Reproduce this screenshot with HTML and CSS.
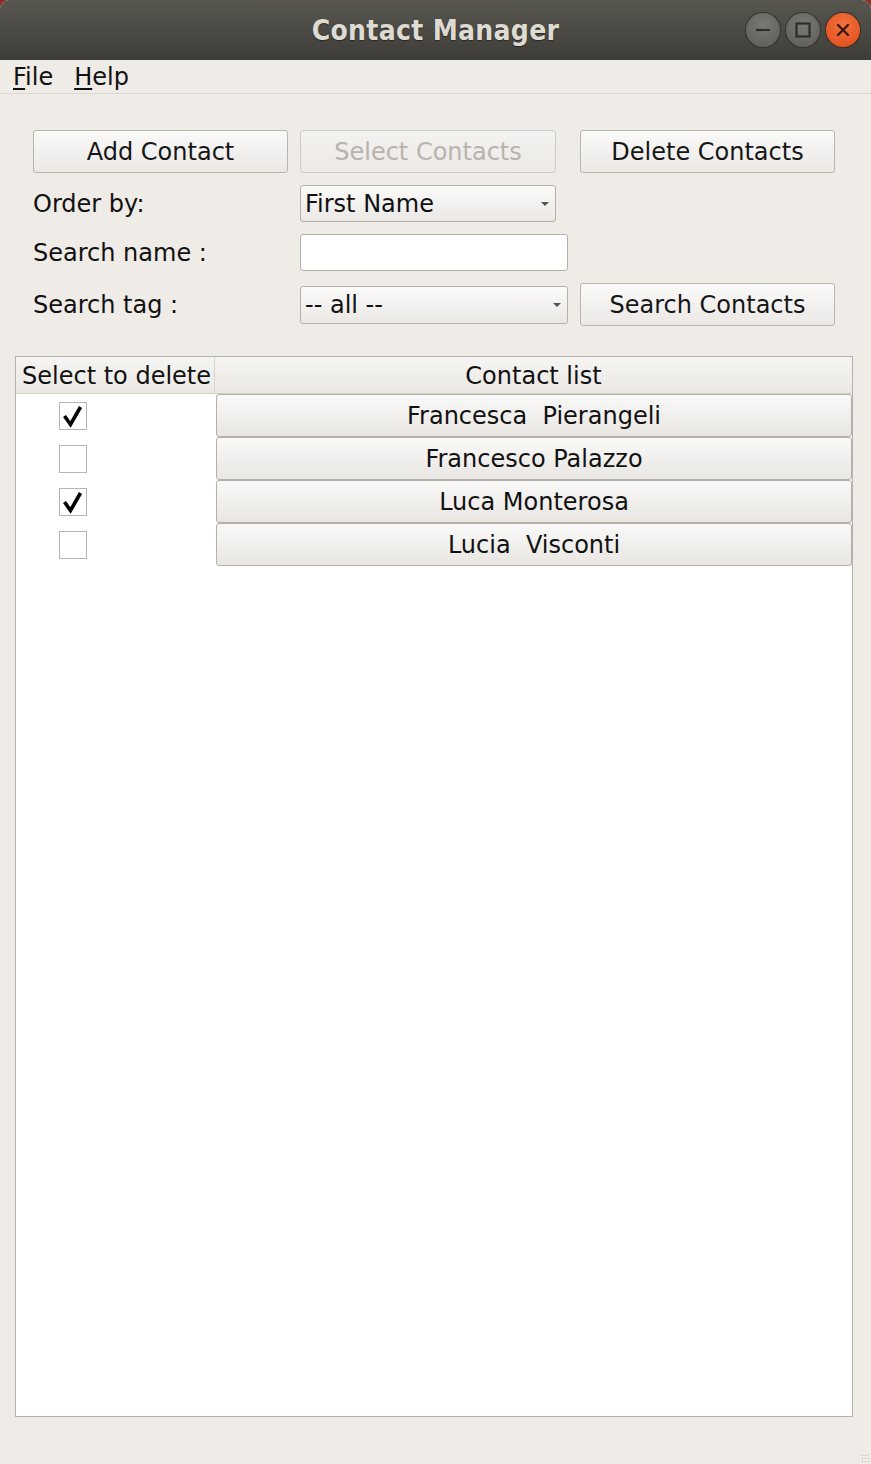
FILE: index.html
```html
<!DOCTYPE html>
<html>
<head>
<meta charset="utf-8">
<link rel="stylesheet" href="styles.css">
</head>
<body>
<div class="window">
  <div class="titlebar">
    <div class="title">Contact Manager</div>
    <div class="wm-buttons">
      <span class="wm wm-min"><svg width="34" height="34" viewBox="0 0 34 34"><line x1="10" y1="17" x2="24" y2="17" stroke="#2e2d2a" stroke-width="2.2"/></svg></span>
      <span class="wm wm-max"><svg width="34" height="34" viewBox="0 0 34 34"><rect x="10.5" y="10.5" width="13" height="13" fill="none" stroke="#2e2d2a" stroke-width="2.2"/></svg></span>
      <span class="wm wm-close"><svg width="34" height="34" viewBox="0 0 34 34"><path d="M12 12 L22 22 M22 12 L12 22" stroke="#3a1a0e" stroke-width="2.4" stroke-linecap="round"/></svg></span>
    </div>
  </div>
  <div class="menubar">
    <span class="menu"><u>F</u>ile</span>
    <span class="menu"><u>H</u>elp</span>
  </div>
  <div class="content">
    <div class="form">
      <button class="btn">Add Contact</button>
      <button class="btn disabled narrow">Select Contacts</button>
      <button class="btn">Delete Contacts</button>

      <div class="label">Order by:</div>
      <div class="combo narrow"><span>First Name</span><span class="arrow"></span></div>
      <div></div>

      <div class="label">Search name :</div>
      <div class="input"></div>
      <div></div>

      <div class="label">Search tag :</div>
      <div class="combo tag"><span>-- all --</span><span class="arrow"></span></div>
      <button class="btn">Search Contacts</button>
    </div>

    <div class="table">
      <div class="thead">
        <div class="th th-sel">Select to delete</div>
        <div class="th th-list">Contact list</div>
      </div>
      <div class="tbody">
        <div class="row">
          <div class="cell-sel"><span class="check"><svg width="26" height="26" viewBox="0 0 26 26"><path d="M4.5 13 L10.5 21.5 L20.5 4" fill="none" stroke="#000" stroke-width="3.6" stroke-linejoin="miter"/></svg></span></div>
          <div class="cell-btn">Francesca&nbsp; Pierangeli</div>
        </div>
        <div class="row">
          <div class="cell-sel"><span class="check"></span></div>
          <div class="cell-btn">Francesco Palazzo</div>
        </div>
        <div class="row">
          <div class="cell-sel"><span class="check"><svg width="26" height="26" viewBox="0 0 26 26"><path d="M4.5 13 L10.5 21.5 L20.5 4" fill="none" stroke="#000" stroke-width="3.6" stroke-linejoin="miter"/></svg></span></div>
          <div class="cell-btn">Luca Monterosa</div>
        </div>
        <div class="row">
          <div class="cell-sel"><span class="check"></span></div>
          <div class="cell-btn">Lucia&nbsp; Visconti</div>
        </div>
      </div>
    </div>
    <div class="grip"></div>
  </div>
</div>
</body>
</html>
```

FILE: styles.css
```css
html, body {
  margin: 0;
  padding: 0;
}
body {
  background: #8e2a26;
  width: 871px;
  height: 1464px;
  overflow: hidden;
  font-family: "DejaVu Sans", "Liberation Sans", sans-serif;
}
.window {
  width: 871px;
  height: 1464px;
  display: flex;
  flex-direction: column;
  background: #efebe7;
  border-radius: 9px 9px 0 0;
  overflow: hidden;
}
.titlebar {
  height: 60px;
  flex: none;
  background: linear-gradient(#58564f, #3e3d39);
  display: flex;
  align-items: center;
  justify-content: center;
  position: relative;
}
.title {
  color: #dfdbd2;
  font-family: "DejaVu Sans Condensed", "DejaVu Sans", sans-serif;
  font-weight: bold;
  font-size: 28px;
  letter-spacing: 0.3px;
  text-shadow: 0 1px 1px #2a2926;
  margin-top: 1px;
}
.wm-buttons {
  position: absolute;
  right: 11px;
  top: 13px;
  display: flex;
  gap: 6px;
}
.wm {
  width: 34px;
  height: 34px;
  border-radius: 50%;
  display: block;
  box-sizing: border-box;
}
.wm svg { display: block; }
.wm-min, .wm-max {
  background: radial-gradient(circle at 50% 35%, #7b7973, #5c5a55);
  box-shadow: 0 0 0 1px #33322e;
}
.wm-close {
  background: radial-gradient(circle at 50% 35%, #f2723f, #df4a16);
  box-shadow: 0 0 0 1px #3a2a22;
}
.menubar {
  height: 33px;
  flex: none;
  border-bottom: 1px solid #dad6d1;
  display: flex;
  align-items: center;
  gap: 21px;
  padding-left: 13px;
  font-family: "DejaVu Sans", sans-serif;
  font-size: 24px;
  color: #111;
}
.menu u {
  text-decoration-thickness: 2px;
  text-underline-offset: 3px;
}
.content {
  flex: 1;
  padding: 36px 18px 0 15px;
  display: flex;
  flex-direction: column;
  position: relative;
}
.form {
  display: grid;
  grid-template-columns: 255px 268px 255px;
  grid-template-rows: 43px 37px 37px 43px;
  column-gap: 12px;
  row-gap: 12px;
  margin-left: 18px;
  align-items: center;
}
.btn {
  height: 43px;
  width: 255px;
  box-sizing: border-box;
  border: 1px solid #b8b4ae;
  border-radius: 3px;
  background: linear-gradient(#fafaf9, #ebe8e5);
  font-family: "DejaVu Sans", sans-serif;
  font-size: 24px;
  color: #161616;
  padding: 0;
  margin: 0;
}
.btn.narrow { width: 256px; }
.btn.disabled {
  color: #b7b3ae;
  border-color: #cfcbc6;
  background: linear-gradient(#f4f2f0, #ece9e6);
}
.label {
  font-size: 24px;
  color: #111;
  white-space: nowrap;
}
.combo {
  height: 37px;
  box-sizing: border-box;
  border: 1px solid #b4b0aa;
  border-radius: 3px;
  background: linear-gradient(#fbfbfa, #ebe8e5);
  display: flex;
  align-items: center;
  justify-content: space-between;
  padding: 0 6px 0 4px;
  font-size: 24px;
  color: #111;
}
.combo.narrow { width: 256px; }
.combo.tag { height: 38px; }
.arrow {
  width: 0;
  height: 0;
  border-left: 4px solid transparent;
  border-right: 4px solid transparent;
  border-top: 4px solid #555;
}
.input {
  height: 37px;
  box-sizing: border-box;
  background: #fff;
  border: 1px solid #b4b0aa;
  border-radius: 3px;
}
.table {
  margin-top: 30px;
  height: 1061px;
  box-sizing: border-box;
  border: 1px solid #b6b3ae;
  background: #fff;
  display: flex;
  flex-direction: column;
}
.thead {
  display: flex;
  height: 37px;
  flex: none;
  box-sizing: border-box;
  border-bottom: 1px solid #d2cec9;
  background: linear-gradient(#f6f5f3, #ebe8e4);
}
.th {
  font-size: 24px;
  color: #111;
  display: flex;
  align-items: center;
  white-space: nowrap;
  padding-top: 2px;
  box-sizing: border-box;
}
.th-sel {
  width: 199px;
  padding-left: 6px;
  border-right: 1px solid #d8d4cf;
}
.th-list {
  flex: 1;
  justify-content: center;
}
.tbody {
  display: flex;
  flex-direction: column;
}
.row {
  display: flex;
  height: 43px;
}
.cell-sel {
  width: 200px;
  flex: none;
  display: flex;
  align-items: center;
  padding-left: 43px;
  box-sizing: border-box;
}
.check {
  width: 28px;
  height: 28px;
  box-sizing: border-box;
  border: 1px solid #b8b5b0;
  background: #fff;
  display: flex;
  align-items: center;
  justify-content: center;
}
.check svg { display: block; }
.cell-btn {
  flex: 1;
  box-sizing: border-box;
  border: 1px solid #b3b0ab;
  border-radius: 3px;
  background: linear-gradient(#f9f9f8, #e9e6e2);
  display: flex;
  align-items: center;
  justify-content: center;
  font-size: 24px;
  color: #111;
  white-space: nowrap;
}
.grip {
  position: absolute;
  right: 2px;
  bottom: 2px;
  width: 8px;
  height: 8px;
  background:
    radial-gradient(circle, #b5b1ab 0.8px, transparent 1px) 0 0 / 3px 3px;
}
```
